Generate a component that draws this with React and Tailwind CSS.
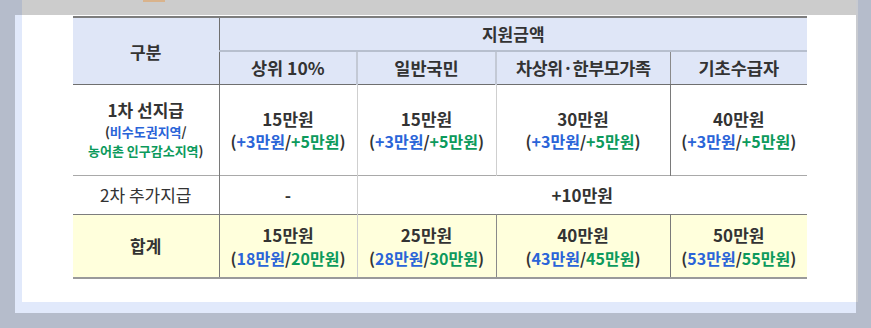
const heads = ['상위 10%', '일반국민', '차상위·한부모가족', '기초수급자'];

const first = ['15만원', '15만원', '30만원', '40만원'];
const totals = [
  ['15만원', '18만원', '20만원'],
  ['25만원', '28만원', '30만원'],
  ['40만원', '43만원', '45만원'],
  ['50만원', '53만원', '55만원'],
];

const vline = ['border-l-[#7a7a7a]', 'border-l-[#cfcfcf]', 'border-l-[#cfcfcf]', 'border-l-[#7a7a7a]'];
const vlineTotal = ['border-l-[#7a7a7a]', 'border-l-[#cfcfcf]', 'border-l-[#8a8a8a]', 'border-l-[#7a7a7a]'];

const Blue = ({ children }) => <span className="text-[#2a64d8]">{children}</span>;
const Green = ({ children }) => <span className="text-[#0c9a5c]">{children}</span>;

export default function App() {
  return (
    <div className="flex h-[328px] w-[871px] overflow-hidden bg-[#b5bccb] font-['Noto_Sans_CJK_KR',sans-serif] text-[#333333]">
      <div className="w-[856px]">
        <div className="ml-[22px] h-[15px] w-[834px] bg-[#cccccc]">
          <div className="ml-[121px] h-[2px] w-[22px] bg-[#d9b38c]" />
        </div>
        <div className="ml-[15px] h-[298px] w-[841px] bg-[#e1e9fb] pb-[11px] pl-[7px]">
          <div className="h-full bg-white pl-[51px] pt-px">
            <table className="w-[734px] table-fixed border-collapse text-center">
              <colgroup>
                <col className="w-[146px]" />
                <col className="w-[138px]" />
                <col className="w-[139px]" />
                <col className="w-[174px]" />
                <col className="w-[137px]" />
              </colgroup>
              <thead>
                <tr className="h-[34px] border-t-2 border-t-[#7d7d7d] bg-[#dfe6f7]">
                  <th
                    rowSpan={2}
                    className="border-b border-r border-b-[#6f6f6f] border-r-[#6f6f6f] pt-[2px] text-[17px] font-bold"
                  >
                    구분
                  </th>
                  <th colSpan={4} className="border-b-2 border-b-[#b7bfce] text-[17px] font-bold">
                    지원금액
                  </th>
                </tr>
                <tr className="h-[33px] bg-[#dfe6f7]">
                  {heads.map((label, i) => (
                    <th
                      key={label}
                      className={`whitespace-nowrap border-b border-b-[#6f6f6f] text-[17.5px] font-bold ${
                        i > 0 ? (i === 3 ? 'border-l border-l-[#8a8a8a]' : 'border-l-2 border-l-[#c3c9d5]') : ''
                      } ${i === 2 ? 'tracking-[-0.5px]' : ''}`}
                    >
                      {label}
                    </th>
                  ))}
                </tr>
              </thead>
              <tbody>
                <tr className="h-[91px] border-b border-b-[#a9a9a9]">
                  <td className="leading-[19px]">
                    <div className="text-[17px] font-bold">1차 선지급</div>
                    <div className="mt-[3px] text-[13px] font-bold">
                      (<Blue>비수도권지역</Blue>/
                    </div>
                    <div className="text-[13px] font-bold">
                      <Green>농어촌 인구감소지역</Green>)
                    </div>
                  </td>
                  {first.map((v, i) => (
                    <td key={i} className={`border-l ${vline[i]}`}>
                      <div className="text-[17px] font-bold leading-[22px]">{v}</div>
                      <div className="text-[16px] font-bold leading-[22px]">
                        (<Blue>+3만원</Blue>/<Green>+5만원</Green>)
                      </div>
                    </td>
                  ))}
                </tr>
                <tr className="h-[39px] border-b border-b-[#7d7d7d]">
                  <td className="text-[17px]">2차 추가지급</td>
                  <td className="border-l border-l-[#7a7a7a] text-[17px] font-bold">-</td>
                  <td colSpan={4} className="border-l border-l-[#cfcfcf] text-[17px] font-bold">
                    +10만원
                  </td>
                </tr>
                <tr className="h-[64px] border-b-2 border-b-[#9a9a9a] bg-[#ffffdc]">
                  <td className="text-[17px] font-bold">합계</td>
                  {totals.map(([v, a, b], i) => (
                    <td key={i} className={`border-l ${vlineTotal[i]}`}>
                      <div className="text-[17px] font-bold leading-[24px]">{v}</div>
                      <div className="text-[16px] font-bold leading-[22px]">
                        (<Blue>{a}</Blue>/<Green>{b}</Green>)
                      </div>
                    </td>
                  ))}
                </tr>
              </tbody>
            </table>
          </div>
        </div>
      </div>
      <div className="h-[302px] w-[2px] bg-[#c9cbd0]" />
    </div>
  );
}
